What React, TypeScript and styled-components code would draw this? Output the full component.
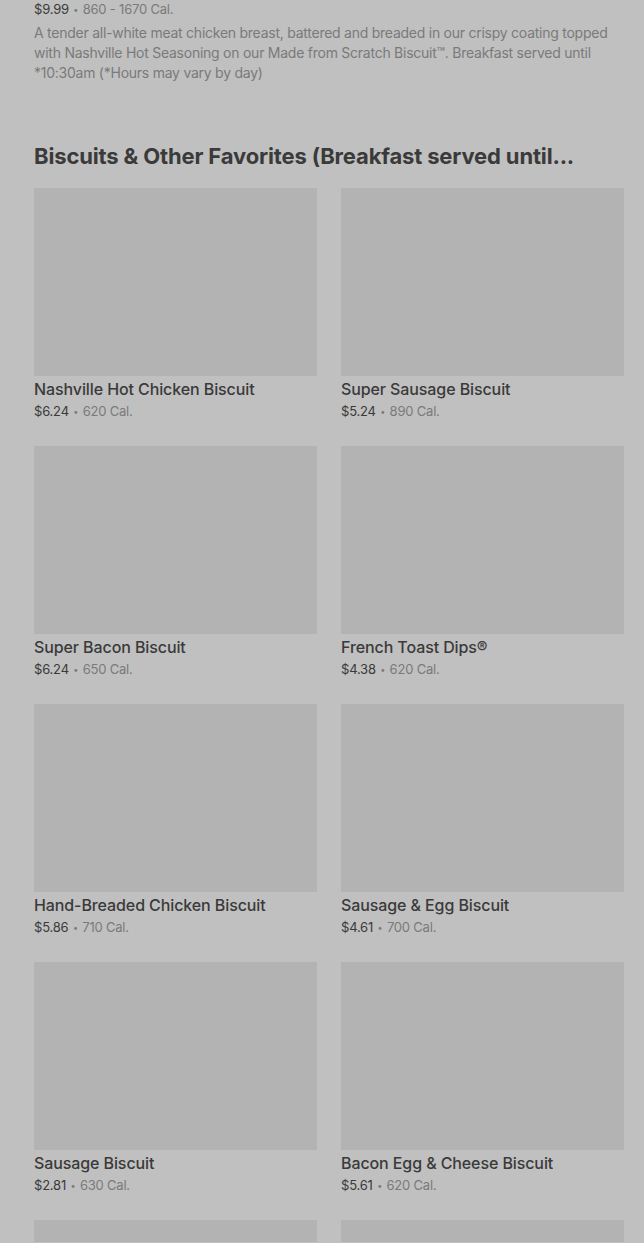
import * as React from "react";
import styled, { createGlobalStyle } from "styled-components";

const GlobalStyle = createGlobalStyle`
  html, body {
    margin: 0;
    padding: 0;
    background: #c0c0c0;
    font-family: Inter, "Noto Sans", Arial, sans-serif;
    overflow: hidden;
  }
`;

const Page = styled.div`
  width: 644px;
  height: 1243px;
  overflow: hidden;
  background: #c0c0c0;
  box-sizing: border-box;
  padding: 0 20px 0 34px;
  margin-top: -1px;
`;

const TopItem = styled.div`
  padding-bottom: 57px;
`;

const PriceLine = styled.div`
  font-size: 13px;
  line-height: 20px;
  color: #7a7a7a;
  letter-spacing: -0.2px;
  white-space: nowrap;
`;

const Price = styled.span`
  color: #3a3a3a;
`;

const Dot = styled.span`
  font-size: 9px;
  vertical-align: 1px;
  margin: 0 1px;
`;

const Desc = styled.p`
  margin: 3px 0 0;
  width: 580px;
  font-size: 14px;
  line-height: 20px;
  color: #7a7a7a;
  letter-spacing: -0.25px;
`;

const Heading = styled.h2`
  margin: 0 0 16px;
  width: 590px;
  font-size: 22px;
  line-height: 32px;
  font-weight: 700;
  letter-spacing: -0.15px;
  color: #3a3a3a;
  white-space: nowrap;
  overflow: hidden;
  text-overflow: ellipsis;
`;

const Grid = styled.div`
  display: grid;
  grid-template-columns: 283px 283px;
  column-gap: 24px;
  row-gap: 24px;
`;

const Card = styled.div`
  display: flex;
  flex-direction: column;
`;

const Thumb = styled.div`
  height: 188px;
  background: #b3b3b3;
`;

const Title = styled.div`
  margin-top: 3px;
  font-size: 16px;
  line-height: 20px;
  font-weight: 500;
  color: #3a3a3a;
  letter-spacing: -0.1px;
  white-space: nowrap;
`;

const CardPrice = styled(PriceLine)`
  margin-top: 1px;
  line-height: 22px;
  height: 22px;
`;

const items = [
  { name: "Nashville Hot Chicken Biscuit", price: "$6.24", cal: "620 Cal." },
  { name: "Super Sausage Biscuit", price: "$5.24", cal: "890 Cal." },
  { name: "Super Bacon Biscuit", price: "$6.24", cal: "650 Cal." },
  { name: "French Toast Dips®", price: "$4.38", cal: "620 Cal." },
  { name: "Hand-Breaded Chicken Biscuit", price: "$5.86", cal: "710 Cal." },
  { name: "Sausage & Egg Biscuit", price: "$4.61", cal: "700 Cal." },
  { name: "Sausage Biscuit", price: "$2.81", cal: "630 Cal." },
  { name: "Bacon Egg & Cheese Biscuit", price: "$5.61", cal: "620 Cal." },
  { name: "Chicken Biscuit", price: "$4.20", cal: "450 Cal." },
  { name: "Bacon Biscuit", price: "$3.10", cal: "460 Cal." },
];

const App = () => {
  return (
    <Page>
      <GlobalStyle />
      <TopItem>
        <PriceLine>
          <Price>$9.99</Price> <Dot>•</Dot> 860 - 1670 Cal.
        </PriceLine>
        <Desc>
          A tender all-white meat chicken breast, battered and breaded in our crispy coating topped
          with Nashville Hot Seasoning on our Made from Scratch Biscuit™. Breakfast served until
          *10:30am (*Hours may vary by day)
        </Desc>
      </TopItem>
      <Heading>Biscuits &amp; Other Favorites (Breakfast served until...</Heading>
      <Grid>
        {items.map((item, i) => (
          <Card key={i}>
            <Thumb />
            <Title>{item.name}</Title>
            <CardPrice>
              <Price>{item.price}</Price> <Dot>•</Dot> {item.cal}
            </CardPrice>
          </Card>
        ))}
      </Grid>
    </Page>
  );
};

export default App;
